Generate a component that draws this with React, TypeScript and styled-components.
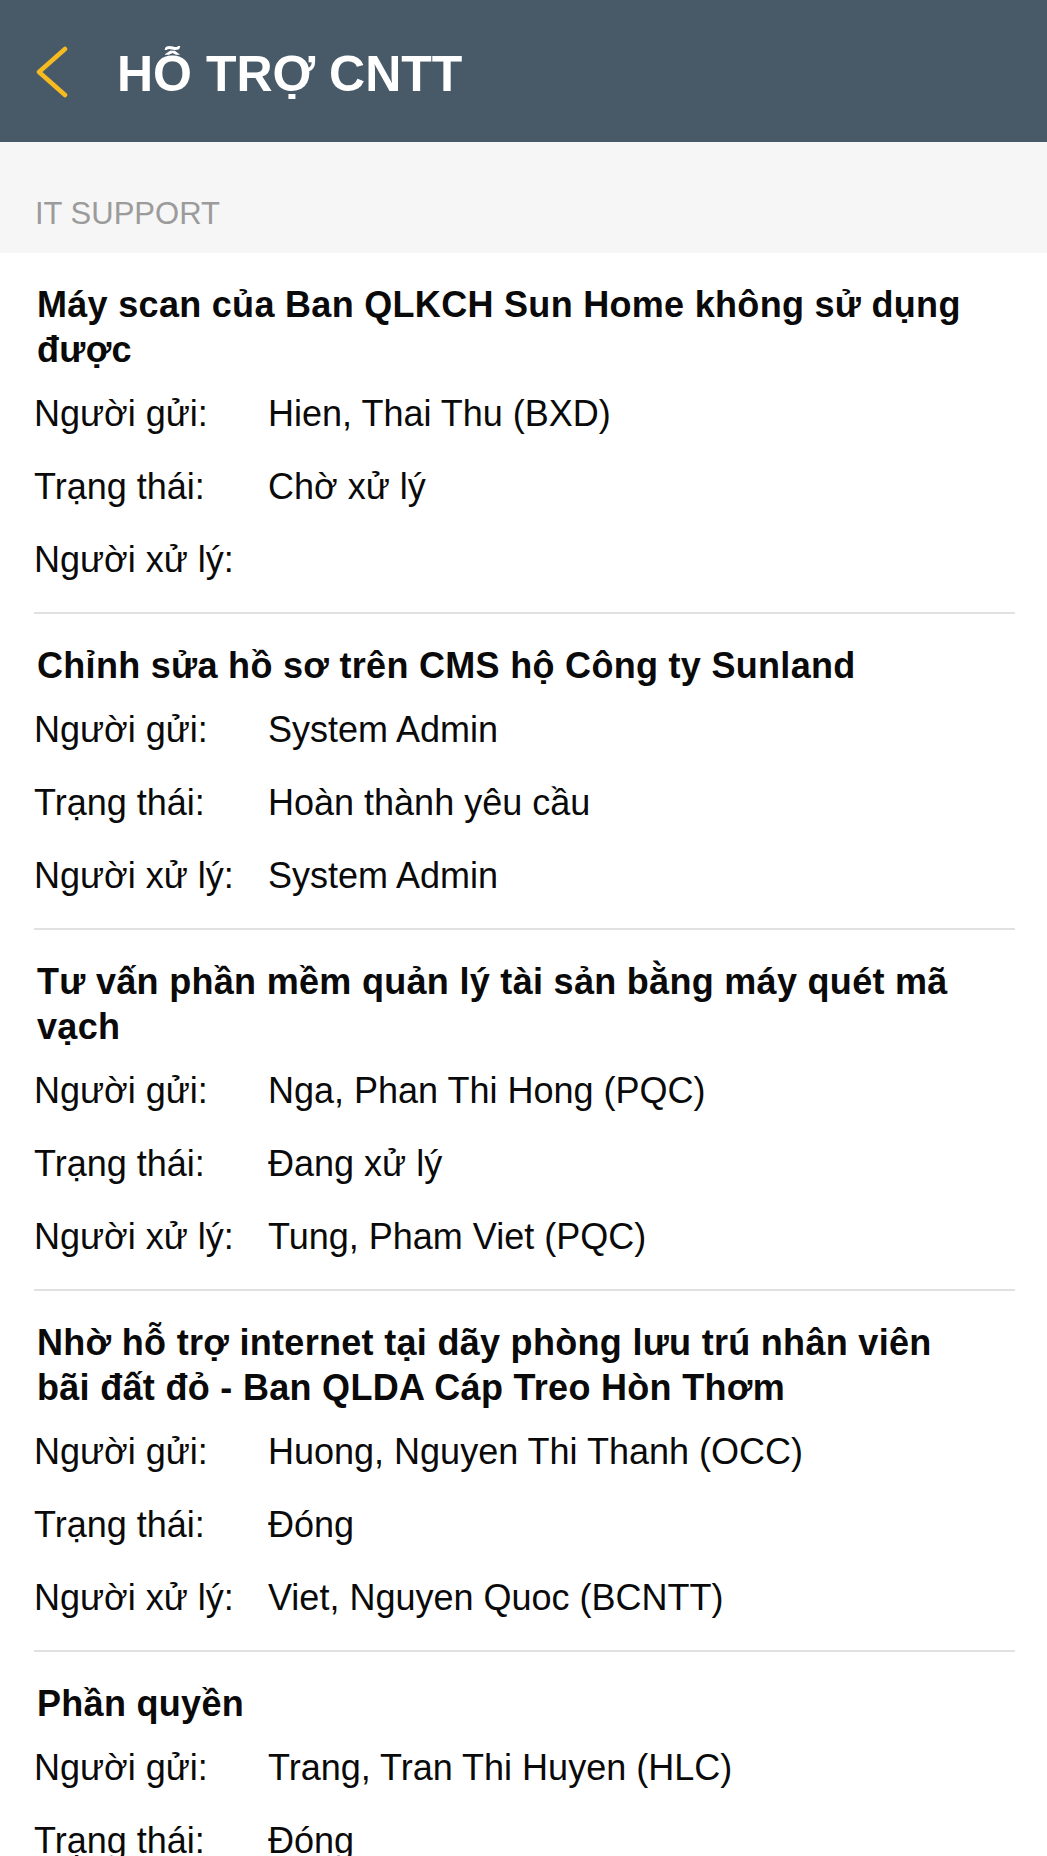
import React from "react";
import styled, { createGlobalStyle } from "styled-components";

const GlobalStyle = createGlobalStyle`
  html, body {
    margin: 0;
    padding: 0;
    background: #ffffff;
  }
  body {
    font-family: "Liberation Sans", Arial, Helvetica, sans-serif;
    color: #0a0a0a;
    -webkit-font-smoothing: antialiased;
  }
`;

const Page = styled.div`
  width: 1047px;
  min-height: 1856px;
  background: #ffffff;
`;

const Header = styled.header`
  height: 142px;
  box-sizing: border-box;
  padding: 6px 0 0 36px;
  background: #485a67;
  display: flex;
  align-items: center;
  gap: 49px;
`;

const BackButton = styled.button`
  width: 32px;
  height: 52px;
  padding: 0;
  margin: 0 0 4px;
  border: none;
  background: transparent;
  display: flex;
  cursor: pointer;
`;

const HeaderTitle = styled.h1`
  margin: 0;
  font-size: 50px;
  line-height: 50px;
  font-weight: 700;
  color: #ffffff;
`;

const SectionHeader = styled.div`
  background: #f6f6f6;
  padding: 55px 35px 22px;
  font-size: 31px;
  line-height: 34px;
  color: #9b9b9b;
`;

const List = styled.div`
  display: flex;
  flex-direction: column;
`;

const Item = styled.article`
  margin: 0 32px 0 34px;
  padding: 29px 0 16px;
  border-bottom: 2px solid #e1e1e1;
`;

const ItemTitle = styled.h2`
  margin: 0 0 5px;
  padding: 0 40px 0 3px;
  font-size: 36px;
  line-height: 45px;
  font-weight: 700;
  letter-spacing: 0.3px;
  color: #0a0a0a;
`;

const Field = styled.div`
  display: grid;
  grid-template-columns: 234px 1fr;
  height: 73px;
  font-size: 36px;
  line-height: 73px;
  white-space: nowrap;
`;

const FieldLabel = styled.span`
  color: #0a0a0a;
`;

const FieldValue = styled.span`
  color: #0a0a0a;
`;

type Ticket = {
  title: string;
  sender: string;
  status: string;
  handler: string;
};

const tickets: Ticket[] = [
  {
    title: "Máy scan của Ban QLKCH Sun Home không sử dụng được",
    sender: "Hien, Thai Thu (BXD)",
    status: "Chờ xử lý",
    handler: "",
  },
  {
    title: "Chỉnh sửa hồ sơ trên CMS hộ Công ty Sunland",
    sender: "System Admin",
    status: "Hoàn thành yêu cầu",
    handler: "System Admin",
  },
  {
    title: "Tư vấn phần mềm quản lý tài sản bằng máy quét mã vạch",
    sender: "Nga, Phan Thi Hong (PQC)",
    status: "Đang xử lý",
    handler: "Tung, Pham Viet (PQC)",
  },
  {
    title:
      "Nhờ hỗ trợ internet tại dãy phòng lưu trú nhân viên bãi đất đỏ - Ban QLDA Cáp Treo Hòn Thơm",
    sender: "Huong, Nguyen Thi Thanh (OCC)",
    status: "Đóng",
    handler: "Viet, Nguyen Quoc (BCNTT)",
  },
  {
    title: "Phần quyền",
    sender: "Trang, Tran Thi Huyen (HLC)",
    status: "Đóng",
    handler: "",
  },
];

const ChevronLeft = () => (
  <svg width="32" height="52" viewBox="0 0 32 52" fill="none">
    <polyline
      points="29,3 3,26 29,49"
      stroke="#f6bb21"
      strokeWidth="4.5"
      strokeLinecap="round"
      strokeLinejoin="round"
    />
  </svg>
);

export default function App() {
  return (
    <>
      <GlobalStyle />
      <Page>
        <Header>
          <BackButton aria-label="Quay lại">
            <ChevronLeft />
          </BackButton>
          <HeaderTitle>HỖ TRỢ CNTT</HeaderTitle>
        </Header>
        <SectionHeader>IT SUPPORT</SectionHeader>
        <List>
          {tickets.map((t, i) => (
            <Item key={i}>
              <ItemTitle>{t.title}</ItemTitle>
              <Field>
                <FieldLabel>Người gửi:</FieldLabel>
                <FieldValue>{t.sender}</FieldValue>
              </Field>
              <Field>
                <FieldLabel>Trạng thái:</FieldLabel>
                <FieldValue>{t.status}</FieldValue>
              </Field>
              <Field>
                <FieldLabel>Người xử lý:</FieldLabel>
                <FieldValue>{t.handler}</FieldValue>
              </Field>
            </Item>
          ))}
        </List>
      </Page>
    </>
  );
}
